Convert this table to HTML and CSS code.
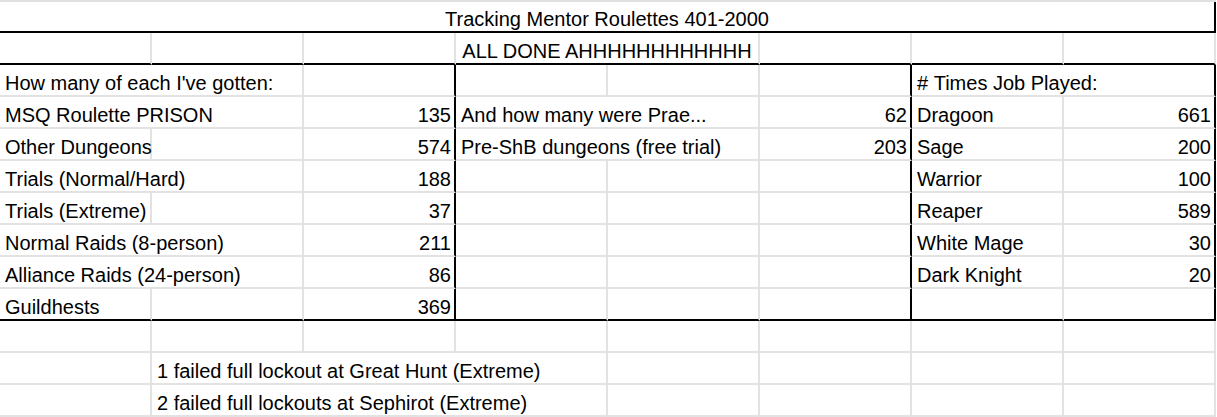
FILE: index.html
```html
<!DOCTYPE html>
<html lang="en">
<head>
<meta charset="utf-8">
<title>Tracking Mentor Roulettes 401-2000</title>
<link rel="stylesheet" href="styles.css">
</head>
<body>
<div class="sheet">
  <!-- row 1 -->
  <div class="c span8 bb br center">Tracking Mentor Roulettes 401-2000</div>
  <!-- row 2 -->
  <div class="c bb"></div>
  <div class="c bb"></div>
  <div class="c bb"></div>
  <div class="c span2 bb center">ALL DONE AHHHHHHHHHHHH</div>
  <div class="c bb"></div>
  <div class="c bb"></div>
  <div class="c bb"></div>
  <!-- row 3 -->
  <div class="c span2">How many of each I've gotten:</div>
  <div class="c br"></div>
  <div class="c"></div>
  <div class="c"></div>
  <div class="c br"></div>
  <div class="c span2 br">#&nbsp;Times Job Played:</div>
  <!-- row 4 -->
  <div class="c span2">MSQ Roulette PRISON</div>
  <div class="c num br">135</div>
  <div class="c span2">And how many were Prae...</div>
  <div class="c num br">62</div>
  <div class="c">Dragoon</div>
  <div class="c num br">661</div>
  <!-- row 5 -->
  <div class="c">Other Dungeons</div>
  <div class="c"></div>
  <div class="c num br">574</div>
  <div class="c span2">Pre-ShB dungeons (free trial)</div>
  <div class="c num br">203</div>
  <div class="c">Sage</div>
  <div class="c num br">200</div>
  <!-- row 6 -->
  <div class="c span2">Trials (Normal/Hard)</div>
  <div class="c num br">188</div>
  <div class="c"></div>
  <div class="c"></div>
  <div class="c br"></div>
  <div class="c">Warrior</div>
  <div class="c num br">100</div>
  <!-- row 7 -->
  <div class="c">Trials (Extreme)</div>
  <div class="c"></div>
  <div class="c num br">37</div>
  <div class="c"></div>
  <div class="c"></div>
  <div class="c br"></div>
  <div class="c">Reaper</div>
  <div class="c num br">589</div>
  <!-- row 8 -->
  <div class="c span2">Normal Raids (8-person)</div>
  <div class="c num br">211</div>
  <div class="c"></div>
  <div class="c"></div>
  <div class="c br"></div>
  <div class="c">White Mage</div>
  <div class="c num br">30</div>
  <!-- row 9 -->
  <div class="c span2">Alliance Raids (24-person)</div>
  <div class="c num br">86</div>
  <div class="c"></div>
  <div class="c"></div>
  <div class="c br"></div>
  <div class="c">Dark Knight</div>
  <div class="c num br">20</div>
  <!-- row 10 -->
  <div class="c bb">Guildhests</div>
  <div class="c bb"></div>
  <div class="c num bb br">369</div>
  <div class="c bb"></div>
  <div class="c bb"></div>
  <div class="c bb br"></div>
  <div class="c bb"></div>
  <div class="c bb br"></div>
  <!-- row 11 -->
  <div class="c"></div>
  <div class="c"></div>
  <div class="c"></div>
  <div class="c"></div>
  <div class="c"></div>
  <div class="c"></div>
  <div class="c"></div>
  <div class="c"></div>
  <!-- row 12 -->
  <div class="c"></div>
  <div class="c span3">1 failed full lockout at Great Hunt (Extreme)</div>
  <div class="c"></div>
  <div class="c"></div>
  <div class="c"></div>
  <div class="c"></div>
  <!-- row 13 -->
  <div class="c"></div>
  <div class="c span3">2 failed full lockouts at Sephirot (Extreme)</div>
  <div class="c"></div>
  <div class="c"></div>
  <div class="c"></div>
  <div class="c"></div>
</div>
</body>
</html>
```
FILE: styles.css
```css
html, body {
  margin: 0;
  padding: 0;
  background: #ffffff;
}

body {
  font-family: "Liberation Sans", Arial, sans-serif;
  font-size: 20px;
  color: #000000;
}

.sheet {
  display: grid;
  grid-template-columns: repeat(8, 152px);
  grid-template-rows: 31px repeat(12, 32px);
  width: 1216px;
  border-top: 2px solid #e0e0e0;
}

.c {
  box-sizing: border-box;
  border-right: 2px solid #e2e2e2;
  border-bottom: 2px solid #e2e2e2;
  display: flex;
  align-items: flex-end;
  padding: 0 4px 0 5px;
  line-height: 24px;
  white-space: nowrap;
  min-width: 0;
}

.span2 { grid-column: span 2; }
.span3 { grid-column: span 3; }
.span8 { grid-column: span 8; }

.bb { border-bottom-color: #000000; }
.br { border-right-color: #000000; }

.num {
  justify-content: flex-end;
  padding-right: 3px;
}

.center {
  justify-content: center;
  padding: 0;
}
```
